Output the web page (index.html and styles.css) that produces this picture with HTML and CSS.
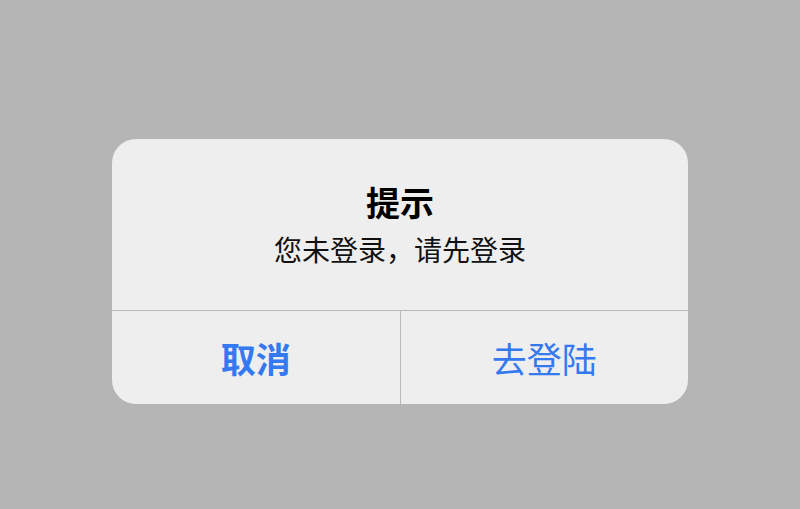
FILE: index.html
```html
<!DOCTYPE html>
<html lang="zh">
<head>
<meta charset="utf-8">
<link rel="stylesheet" href="styles.css">
</head>
<body>
<div class="overlay">
  <div class="dialog">
    <div class="content">
      <div class="title">提示</div>
      <div class="message">您未登录，请先登录</div>
    </div>
    <div class="actions">
      <div class="btn btn-cancel">取消</div>
      <div class="btn btn-confirm">去登陆</div>
    </div>
  </div>
</div>
</body>
</html>
```

FILE: styles.css
```css
html, body {
  margin: 0;
  padding: 0;
  width: 800px;
  height: 509px;
  overflow: hidden;
  background: #b5b5b5;
  font-family: "Noto Sans CJK SC", "Noto Sans", sans-serif;
}
.overlay {
  width: 800px;
  height: 509px;
  padding-top: 139px;
  padding-left: 112px;
  box-sizing: border-box;
}
.dialog {
  width: 576px;
  height: 265px;
  background: #eeeeee;
  border-radius: 24px;
  overflow: hidden;
  display: flex;
  flex-direction: column;
}
.content {
  height: 172px;
  box-sizing: border-box;
  padding-top: 43px;
  text-align: center;
  border-bottom: 1px solid #b9b9b9;
}
.title {
  font-size: 34px;
  font-weight: 700;
  line-height: 40px;
  color: #000;
}
.message {
  margin-top: 7px;
  font-size: 28px;
  line-height: 40px;
  color: #111;
}
.actions {
  display: flex;
  height: 93px;
}
.btn {
  flex: 1;
  display: flex;
  align-items: center;
  justify-content: center;
  font-size: 35px;
  color: #3579f0;
}
.btn-cancel {
  font-weight: 700;
}
.btn-confirm {
  border-left: 1px solid #b9b9b9;
}
```
